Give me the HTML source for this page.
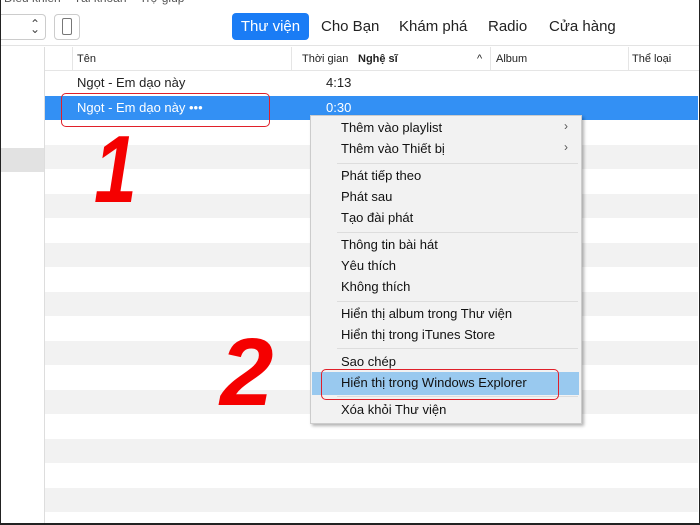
<!DOCTYPE html><html><head><meta charset="utf-8"><style>
*{margin:0;padding:0;box-sizing:border-box}
body{width:700px;height:525px;overflow:hidden;background:#fff;font-family:"Segoe UI","Liberation Sans","DejaVu Sans",sans-serif;position:relative;color:#222}
.a{position:absolute}
.row{position:absolute;left:45px;right:2px;height:24.5px}
.g{background:#f2f2f2}
.mi{position:absolute;left:341px;font-size:13px;color:#111}
.sep{position:absolute;left:337px;width:241px;height:1px;background:#ddd}
</style></head><body>
<div class="a" style="left:0;top:0;width:700px;height:46px;background:#fff;border-bottom:1px solid #e3e3e3"></div>
<div class="a" style="left:4px;top:-9px;font-size:12px;color:#555">Điều khiển &nbsp;&nbsp; Tài khoản &nbsp;&nbsp; Trợ giúp</div>
<div class="a" style="left:0;top:14px;width:46px;height:26px;border:1px solid #ccc;border-left:none;border-radius:0 4px 4px 0"></div>
<div class="a" style="left:30px;top:17px;font-size:12px;color:#444">⌃</div>
<div class="a" style="left:30px;top:22px;font-size:12px;color:#444">⌄</div>
<div class="a" style="left:54px;top:14px;width:26px;height:26px;border:1px solid #ccc;border-radius:4px"></div>
<div class="a" style="left:62px;top:18px;width:10px;height:17px;border:1.5px solid #777;border-radius:2px"></div>
<div class="a" style="left:232px;top:13px;width:77px;height:27px;background:#1a7cf5;border-radius:4px;color:#fff;font-size:15px;line-height:27px;text-align:center">Thư viện</div>
<div class="a" style="left:321px;top:18px;font-size:15px">Cho Bạn</div>
<div class="a" style="left:399px;top:18px;font-size:15px">Khám phá</div>
<div class="a" style="left:488px;top:18px;font-size:15px">Radio</div>
<div class="a" style="left:549px;top:18px;font-size:15px">Cửa hàng</div>
<div class="a" style="left:44px;top:47px;width:1px;height:478px;background:#ddd"></div>
<div class="a" style="left:0;top:148px;width:44px;height:24px;background:#e2e2e2"></div>
<div class="a" style="left:45px;top:47px;right:0;height:24px;border-bottom:1px solid #e5e5e5;font-size:11px;line-height:24px">
<span class="a" style="left:27px;top:0;width:1px;height:24px;background:#e5e5e5"></span>
<span class="a" style="left:32px">Tên</span>
<span class="a" style="left:246px;top:0;width:1px;height:24px;background:#e5e5e5"></span>
<span class="a" style="left:257px">Thời gian</span>
<span class="a" style="left:313px;font-weight:bold">Nghệ sĩ</span>
<span class="a" style="left:432px">^</span>
<span class="a" style="left:445px;top:0;width:1px;height:24px;background:#e5e5e5"></span>
<span class="a" style="left:451px">Album</span>
<span class="a" style="left:583px;top:0;width:1px;height:24px;background:#e5e5e5"></span>
<span class="a" style="left:587px">Thể loại</span>
</div>
<div class="row" style="top:71px;font-size:13px;line-height:24px"><span class="a" style="left:32px">Ngọt - Em dạo này</span><span class="a" style="left:281px">4:13</span></div>
<div class="row" style="top:95.5px;background:#3390f4;color:#fff;font-size:13px;line-height:24px"><span class="a" style="left:32px">Ngọt - Em dạo này •••</span><span class="a" style="left:281px">0:30</span></div>
<div class="row g" style="top:144.5px"></div><div class="row g" style="top:193.5px"></div><div class="row g" style="top:242.5px"></div><div class="row g" style="top:291.5px"></div><div class="row g" style="top:340.5px"></div><div class="row g" style="top:389.5px"></div><div class="row g" style="top:438.5px"></div><div class="row g" style="top:487.5px"></div>
<div class="a" style="left:61px;top:93px;width:209px;height:34px;border:1.5px solid #e0202a;border-radius:5px"></div>
<div class="a" style="left:94px;top:122px;font-size:96px;font-weight:bold;font-style:italic;color:#f50000;font-family:'Liberation Sans',sans-serif;line-height:1;transform:scaleX(0.8);transform-origin:left top">1</div>
<div class="a" style="left:220px;top:325px;font-size:96px;font-weight:bold;font-style:italic;color:#f50000;font-family:'Liberation Sans',sans-serif;line-height:1">2</div>
<div class="a" style="left:310px;top:115px;width:272px;height:309px;background:#f2f2f2;border:1px solid #ccc;box-shadow:2px 2px 3px rgba(0,0,0,.3)"></div>
<div class="a" style="left:312px;top:372px;width:267px;height:23px;background:#99c9ef"></div>
<div class="mi" style="top:120px">Thêm vào playlist</div><div class="a" style="left:564px;top:119px;font-size:12px;color:#555">›</div>
<div class="mi" style="top:141px">Thêm vào Thiết bị</div><div class="a" style="left:564px;top:140px;font-size:12px;color:#555">›</div>
<div class="sep" style="top:163px"></div>
<div class="mi" style="top:168px">Phát tiếp theo</div>
<div class="mi" style="top:189px">Phát sau</div>
<div class="mi" style="top:210px">Tạo đài phát</div>
<div class="sep" style="top:232px"></div>
<div class="mi" style="top:237px">Thông tin bài hát</div>
<div class="mi" style="top:258px">Yêu thích</div>
<div class="mi" style="top:279px">Không thích</div>
<div class="sep" style="top:301px"></div>
<div class="mi" style="top:306px">Hiển thị album trong Thư viện</div>
<div class="mi" style="top:327px">Hiển thị trong iTunes Store</div>
<div class="sep" style="top:348px"></div>
<div class="mi" style="top:354px">Sao chép</div>
<div class="mi" style="top:375px">Hiển thị trong Windows Explorer</div>
<div class="sep" style="top:396px"></div>
<div class="mi" style="top:402px">Xóa khỏi Thư viện</div>
<div class="a" style="left:321px;top:369px;width:238px;height:31px;border:1.5px solid #e0202a;border-radius:5px"></div>
<div class="a" style="left:0;top:0;width:1px;height:525px;background:#222"></div>
<div class="a" style="left:699px;top:0;width:1px;height:525px;background:#222"></div>
<div class="a" style="left:0;top:523px;width:700px;height:2px;background:#222"></div>
</body></html>
